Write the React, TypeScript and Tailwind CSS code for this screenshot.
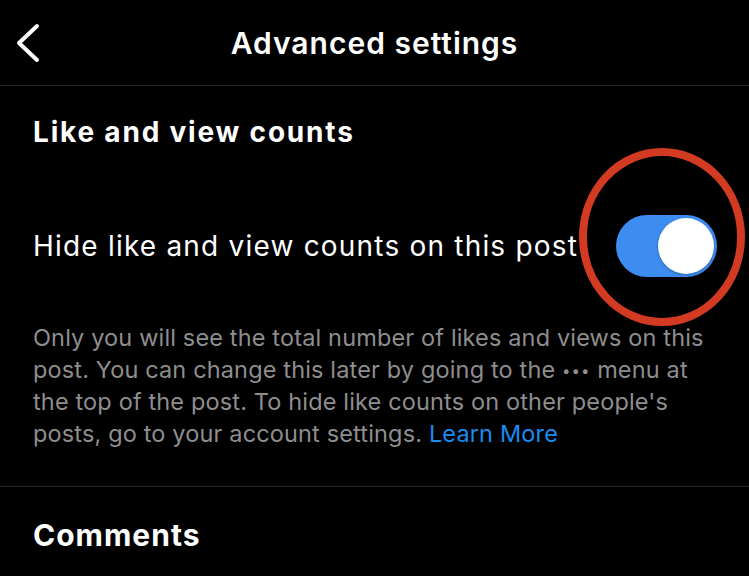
import React from "react";

export default function App() {
  return (
    <div
      className="w-[749px] h-[576px] bg-black text-white overflow-hidden relative"
      style={{ fontFamily: "Inter, 'Noto Sans', sans-serif" }}
    >
      {/* Header */}
      <div className="h-[86px] flex items-center relative border-b border-[#262626]">
        <svg
          className="absolute left-[12px] top-[23px]"
          width="30"
          height="40"
          viewBox="0 0 30 40"
          fill="none"
        >
          <path d="M25 3 L7 20 L25 37" stroke="white" strokeWidth="4" strokeLinecap="round" strokeLinejoin="round" />
        </svg>
        <div className="w-full text-center text-[30px] font-semibold tracking-[1px] leading-none">
          Advanced settings
        </div>
      </div>

      {/* Section */}
      <div className="px-[33px]">
        <div className="pt-[32px] text-[28px] font-bold leading-none tracking-[1.8px]">
          Like and view counts
        </div>
        <div className="flex items-center justify-between mt-[69px] h-[62px]">
          <div className="text-[28px] leading-none tracking-[1.2px] whitespace-nowrap">
            Hide like and view counts on this post
          </div>
          <div className="relative w-[101px] h-[62px] rounded-full bg-[#3d8df0] mr-[-1px]">
            <div className="absolute right-[3px] top-[3px] w-[56px] h-[56px] rounded-full bg-white shadow-[0_1px_3px_rgba(0,0,0,0.3)]" />
          </div>
        </div>
        <div className="text-[23.5px] leading-[31.7px] text-[#8e8e8e] whitespace-nowrap tracking-[0.15px] mt-[45px]">
          Only you will see the total number of likes and views on this
          <br />
          post. You can change this later by going to the <span className="text-[15px] align-[2px] tracking-[1px]">•••</span> menu at
          <br />
          the top of the post. To hide like counts on other people's
          <br />
          posts, go to your account settings. <span className="text-[#1a8cf0]">Learn More</span>
        </div>
      </div>

      <div className="mt-[36px] border-t border-[#262626]" />
      <div className="px-[33px] pt-[33px] text-[30px] font-bold leading-none tracking-[1px]">
        Comments
      </div>

      {/* Red annotation ellipse */}
      <svg className="absolute left-[578px] top-[147px]" width="170" height="182" viewBox="0 0 170 182">
        <ellipse cx="84" cy="90" rx="79" ry="85" fill="none" stroke="#d33a22" strokeWidth="8" />
      </svg>
    </div>
  );
}
